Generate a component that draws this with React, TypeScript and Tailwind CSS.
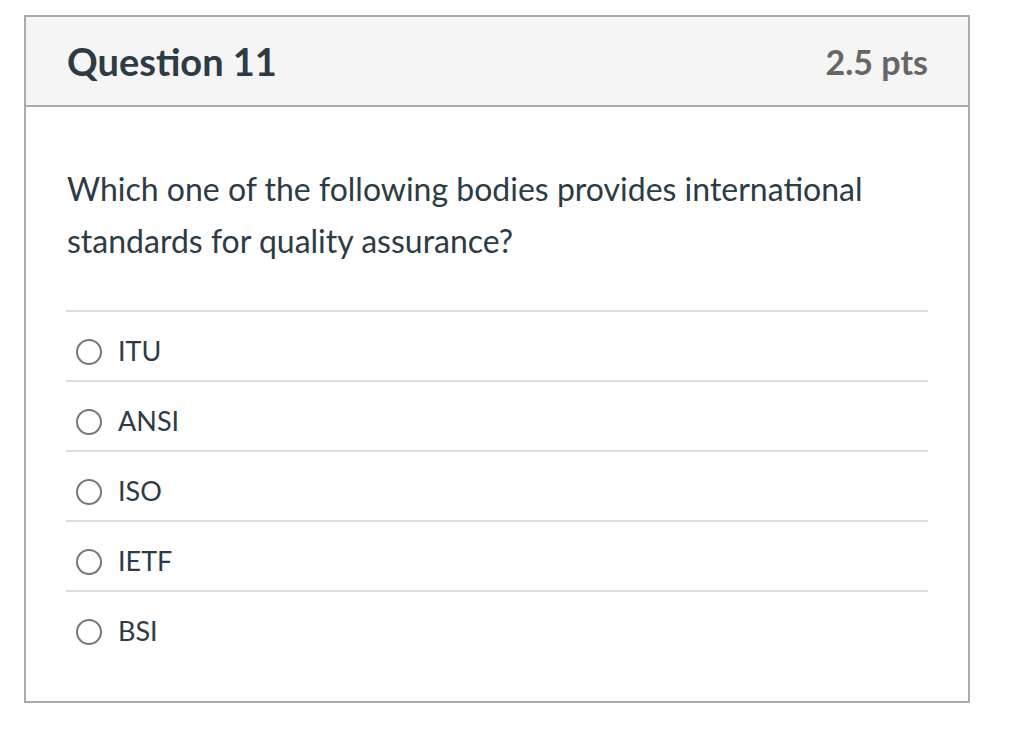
import React from "react";

const answers = ["ITU", "ANSI", "ISO", "IETF", "BSI"];

function AnswerRow({ label }: { label: string }) {
  return (
    <div className="flex h-[70px] items-center border-t-2 border-[#dddddd] pt-3">
      <span className="ml-[10px] h-[26px] w-[26px] shrink-0 rounded-full border-2 border-[#777777] bg-white" />
      <span className="mb-1 ml-4 text-[27px] leading-none text-[#2d3b45]">{label}</span>
    </div>
  );
}

export default function App() {
  return (
    <div
      className="min-h-[734px] bg-white pl-6 pt-[15px]"
      style={{ fontFamily: "Lato, 'Liberation Sans', sans-serif" }}
    >
      <div className="w-[946px] border-2 border-[#aaaaaa]">
        {/* Header */}
        <div className="flex h-[90px] items-center justify-between border-b-2 border-[#aaaaaa] bg-[#f5f5f5] px-10">
          <h2 className="pl-[1px] text-[38px] font-bold text-[#2d3b45]">Question 11</h2>
          <span className="text-[34px] font-bold text-[#666666]">2.5 pts</span>
        </div>

        {/* Body */}
        <div className="px-10 pb-[41px] pt-[56px]">
          <p className="pl-[1px] text-[32px] leading-[52px] text-[#2d3b45]">
            Which one of the following bodies provides international
            <br />
            standards for quality assurance?
          </p>
          <div className="mt-[43px]">
            {answers.map((a) => (
              <AnswerRow key={a} label={a} />
            ))}
          </div>
        </div>
      </div>
    </div>
  );
}
